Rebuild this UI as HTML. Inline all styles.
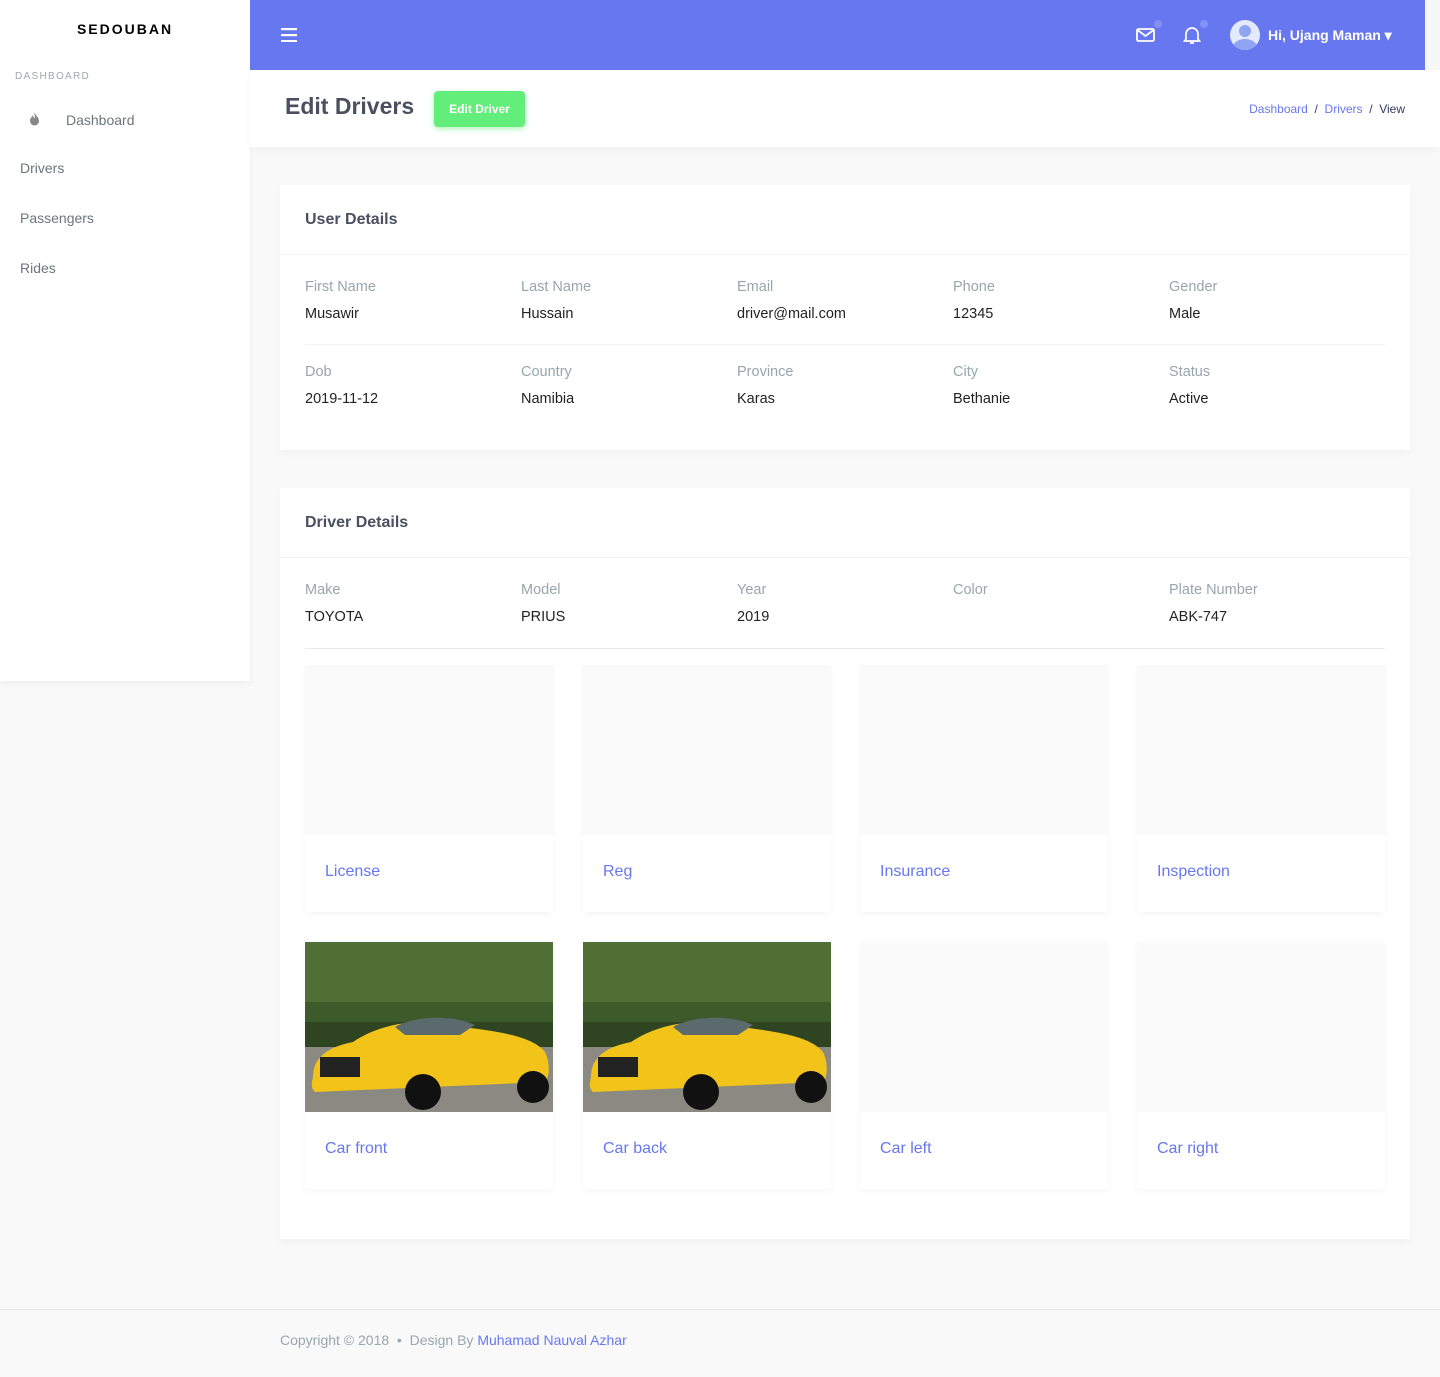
<!DOCTYPE html><html><head><style>
*{box-sizing:border-box;margin:0;padding:0}
body{width:1440px;height:1377px;background:#f9f9f9;font-family:"Liberation Sans",sans-serif;position:relative;overflow:hidden;color:#34395e}
.side{position:absolute;left:0;top:0;width:250px;height:681px;background:#fff;box-shadow:0 2px 6px rgba(0,0,0,.05)}
.brand{position:absolute;top:21px;width:250px;text-align:center;font-weight:bold;font-size:14px;letter-spacing:2px;color:#000}
.side .hd{position:absolute;left:15px;top:71px;font-size:10px;letter-spacing:1.3px;color:#a1a8ae}
.side .it{position:absolute;font-size:14px;color:#6c757d}
.top{position:absolute;left:250px;top:0;width:1175px;height:70px;background:#6777ef}
.strip{position:absolute;left:1425px;top:0;width:15px;height:70px;background:#f7f7f7}
.head{position:absolute;left:250px;top:70px;width:1190px;height:77px;background:#fff;box-shadow:0 4px 8px rgba(0,0,0,.03)}
.card{position:absolute;left:280px;width:1130px;background:#fff;box-shadow:0 4px 8px rgba(0,0,0,.03)}
.card h4{position:absolute;left:25px;font-size:16px;color:#4a5060}
.line{position:absolute;left:0;right:0;height:1px;background:#f2f2f2}
.lab{position:absolute;font-size:14.5px;color:#98a6ad}
.val{position:absolute;font-size:14.5px;color:#222}
.tile{position:absolute;width:248px;height:247px;background:#fff;box-shadow:0 2px 6px rgba(0,0,0,.04)}
.tile .im{height:170px;background:#fafafa}
.tile span{position:absolute;left:20px;top:198px;font-size:16px;color:#6777ef}
</style></head><body>
<div class="side"><div class="brand">SEDOUBAN</div><div class="hd">DASHBOARD</div>
<svg style="position:absolute;left:29px;top:112px" width="11" height="14" viewBox="0 0 11 14"><path d="M5 0C6 3 10 5 10 9a4.5 4.5 0 0 1-9 0C1 6 3 5 4 3c0 2 1 3 2 3C6 4 5 2 5 0z" fill="#888"/></svg>
<div class="it" style="left:66px;top:112px">Dashboard</div><div class="it" style="left:20px;top:160px">Drivers</div><div class="it" style="left:20px;top:210px">Passengers</div><div class="it" style="left:20px;top:260px">Rides</div></div>
<div class="top">
<svg style="position:absolute;left:31px;top:28px" width="16" height="14"><rect y="0" width="16" height="2.2" fill="#fff"/><rect y="6" width="16" height="2.2" fill="#fff"/><rect y="12" width="16" height="2.2" fill="#fff"/></svg>
<svg style="position:absolute;left:886px;top:27px" width="20" height="16" viewBox="0 0 20 16"><rect x="1" y="2" width="17" height="12" rx="1.5" fill="none" stroke="#fff" stroke-width="1.8"/><path d="M1.5 3l8 6 8-6" fill="none" stroke="#fff" stroke-width="1.8"/></svg>
<div style="position:absolute;left:904px;top:20px;width:8px;height:8px;border-radius:50%;background:#8490f2"></div>
<svg style="position:absolute;left:933px;top:25px" width="18" height="20" viewBox="0 0 18 20"><path d="M3 14V9a6 6 0 0 1 12 0v5l1.5 2h-15z M7 18h4" fill="none" stroke="#fff" stroke-width="1.7"/></svg>
<div style="position:absolute;left:950px;top:20px;width:8px;height:8px;border-radius:50%;background:#8490f2"></div>
<div style="position:absolute;left:980px;top:20px;width:30px;height:30px;border-radius:50%;background:#e3eaff;overflow:hidden"><div style="position:absolute;left:9px;top:5px;width:12px;height:12px;border-radius:50%;background:#8fa4f3"></div><div style="position:absolute;left:3px;top:19px;width:24px;height:16px;border-radius:50%;background:#8fa4f3"></div></div>
<div style="position:absolute;left:1018px;top:27px;color:#fff;font-weight:bold;font-size:14px">Hi, Ujang Maman ▾</div></div>
<div class="strip"></div>
<div class="head"><div style="position:absolute;left:35px;top:23px;font-size:23px;font-weight:bold;color:#4a5060">Edit Drivers</div>
<div style="position:absolute;left:184px;top:21px;width:91px;height:36px;background:#63ed7a;border-radius:4px;box-shadow:0 2px 6px #acf5b8;color:#fff;font-size:12px;font-weight:bold;text-align:center;line-height:36px">Edit Driver</div>
<div style="position:absolute;right:35px;top:32px;font-size:12px;color:#34395e"><span style="color:#6777ef">Dashboard</span> &nbsp;/&nbsp; <span style="color:#6777ef">Drivers</span> &nbsp;/&nbsp; View</div></div>
<div class="card" style="top:185px;height:265px"><h4 style="top:26px">User Details</h4><div class="line" style="top:69px"></div><div class="line" style="top:159px;left:25px;right:25px"></div>
<div class="lab" style="left:25px;top:94px">First Name</div><div class="val" style="left:25px;top:121px">Musawir</div>
<div class="lab" style="left:241px;top:94px">Last Name</div><div class="val" style="left:241px;top:121px">Hussain</div>
<div class="lab" style="left:457px;top:94px">Email</div><div class="val" style="left:457px;top:121px">driver@mail.com</div>
<div class="lab" style="left:673px;top:94px">Phone</div><div class="val" style="left:673px;top:121px">12345</div>
<div class="lab" style="left:889px;top:94px">Gender</div><div class="val" style="left:889px;top:121px">Male</div>
<div class="lab" style="left:25px;top:179px">Dob</div><div class="val" style="left:25px;top:206px">2019-11-12</div>
<div class="lab" style="left:241px;top:179px">Country</div><div class="val" style="left:241px;top:206px">Namibia</div>
<div class="lab" style="left:457px;top:179px">Province</div><div class="val" style="left:457px;top:206px">Karas</div>
<div class="lab" style="left:673px;top:179px">City</div><div class="val" style="left:673px;top:206px">Bethanie</div>
<div class="lab" style="left:889px;top:179px">Status</div><div class="val" style="left:889px;top:206px">Active</div></div>
<div class="card" style="top:488px;height:751px"><h4 style="top:26px">Driver Details</h4><div class="line" style="top:69px"></div><div class="line" style="top:160px;left:25px;right:25px;background:#e8e8e8"></div>
<div class="lab" style="left:25px;top:94px">Make</div><div class="val" style="left:25px;top:121px">TOYOTA</div>
<div class="lab" style="left:241px;top:94px">Model</div><div class="val" style="left:241px;top:121px">PRIUS</div>
<div class="lab" style="left:457px;top:94px">Year</div><div class="val" style="left:457px;top:121px">2019</div>
<div class="lab" style="left:673px;top:94px">Color</div>
<div class="lab" style="left:889px;top:94px">Plate Number</div><div class="val" style="left:889px;top:121px">ABK-747</div>
<div class="tile" style="left:25px;top:177px"><div class="im"></div><span>License</span></div>
<div class="tile" style="left:303px;top:177px"><div class="im"></div><span>Reg</span></div>
<div class="tile" style="left:580px;top:177px"><div class="im"></div><span>Insurance</span></div>
<div class="tile" style="left:857px;top:177px"><div class="im"></div><span>Inspection</span></div>
<div class="tile" style="left:25px;top:454px"><div class="im"><svg width="248" height="170" viewBox="0 0 248 170"><rect width="248" height="170" fill="#3d5a2a"/><rect y="0" width="248" height="60" fill="#4f6f34"/><rect y="95" width="248" height="75" fill="#8a8a82"/><rect y="80" width="248" height="25" fill="#2f4420"/><path d="M8 135c0-20 15-30 40-35 30-20 70-25 110-15 40 5 70 10 82 25 5 10 5 25 0 30l-230 10c-5-5-3-10-2-15z" fill="#f2c318"/><path d="M90 85c20-12 60-12 80-2l-15 10h-55z" fill="#5b6a6c"/><circle cx="118" cy="150" r="18" fill="#111"/><circle cx="228" cy="145" r="16" fill="#111"/><rect x="15" y="115" width="40" height="20" fill="#222"/></svg></div><span>Car front</span></div>
<div class="tile" style="left:303px;top:454px"><div class="im"><svg width="248" height="170" viewBox="0 0 248 170"><rect width="248" height="170" fill="#3d5a2a"/><rect y="0" width="248" height="60" fill="#4f6f34"/><rect y="95" width="248" height="75" fill="#8a8a82"/><rect y="80" width="248" height="25" fill="#2f4420"/><path d="M8 135c0-20 15-30 40-35 30-20 70-25 110-15 40 5 70 10 82 25 5 10 5 25 0 30l-230 10c-5-5-3-10-2-15z" fill="#f2c318"/><path d="M90 85c20-12 60-12 80-2l-15 10h-55z" fill="#5b6a6c"/><circle cx="118" cy="150" r="18" fill="#111"/><circle cx="228" cy="145" r="16" fill="#111"/><rect x="15" y="115" width="40" height="20" fill="#222"/></svg></div><span>Car back</span></div>
<div class="tile" style="left:580px;top:454px"><div class="im"></div><span>Car left</span></div>
<div class="tile" style="left:857px;top:454px"><div class="im"></div><span>Car right</span></div></div>
<div style="position:absolute;left:0;top:1309px;width:1440px;height:1px;background:#e8e8e8"></div>
<div style="position:absolute;left:280px;top:1332px;font-size:14px;color:#98a6ad">Copyright © 2018 &nbsp;•&nbsp; Design By <span style="color:#6777ef">Muhamad Nauval Azhar</span></div>
</body></html>
